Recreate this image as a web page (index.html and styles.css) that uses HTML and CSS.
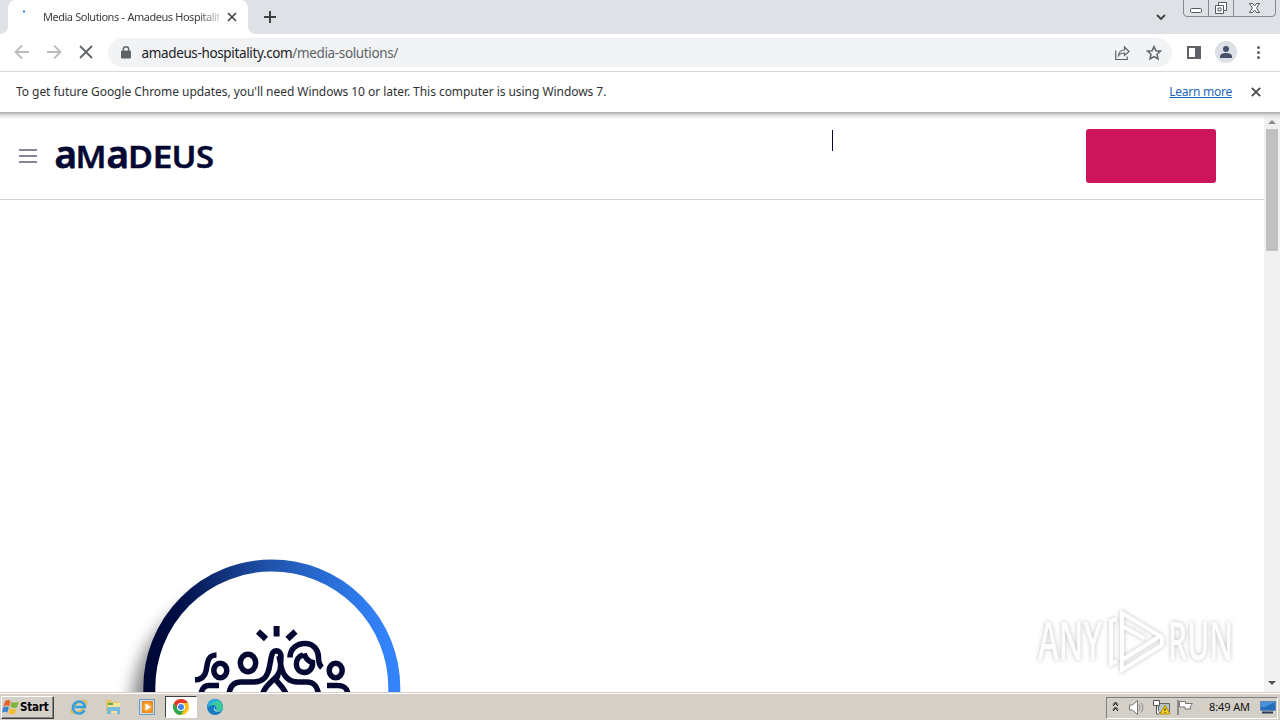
FILE: index.html
```html
<!DOCTYPE html>
<html lang="en">
<head>
<meta charset="utf-8">
<title>Media Solutions - Amadeus Hospitality</title>
<link rel="stylesheet" href="styles.css">
</head>
<body>
<div class="screen">
  <header class="tabstrip">
    <div class="prev-edge"></div>
    <div class="tab">
      <svg class="spinner" width="16" height="16"><path d="M7 3.5a6 6 0 0 1 2 0" fill="none" stroke="#3a78d8" stroke-width="2"/></svg>
      <span class="tab-title">Media Solutions - Amadeus Hospitalit</span>
      <svg class="tab-close" width="10" height="10"><path d="M1 1l8 8M9 1l-8 8" stroke="#3c4043" stroke-width="1.6"/></svg>
    </div>
    <div class="tab-rest">
      <svg width="12" height="12"><path d="M6 0v12M0 6h12" stroke="#3c4043" stroke-width="2"/></svg>
    </div>
    <svg class="chevron" width="10" height="7"><path d="M1 1l4 4 4-4" fill="none" stroke="#3c4043" stroke-width="1.8"/></svg>
    <svg class="wincontrols" width="94" height="17">
      <path d="M.5 0v13q0 3.500 3.500 3.500h85q3.500 0 3.500-3.500V0M25.500 0v16M50.500 0v16" fill="none" stroke="#85888e"/>
      <g fill="#fff" stroke="#54585f">
        <rect x="7.500" y="8.500" width="11" height="4" rx="1"/>
        <path d="M35.500 2.500h8v8h-8z"/><path d="M32.500 5.500h8v8h-8z"/><path d="M35 8h3v3h-3z"/>
        <path d="M66.500 3.500h3l2 2.500 2-2.500h3l-3 4.500 3 4.500h-3l-2-2.500-2 2.500h-3l3-4.500z"/>
      </g>
    </svg>
  </header>

  <nav class="toolbar">
    <svg width="108" height="37" fill="none" stroke="#babcbe" stroke-width="1.800">
      <path d="M29 18H16M22 11.500L15.500 18l6.500 6.500M47 18h13M54 11.500l6.500 6.500-6.500 6.500"/>
      <path d="M80 12l12 12M92 12L80 24" stroke="#5f6368"/>
    </svg>
    <div class="omnibox">
      <svg class="lock" width="10" height="13"><rect y="4.500" width="10" height="8" rx="1" fill="#5f6368"/><path d="M2.300 5V3.500a2.700 2.700 0 0 1 5.400 0V5" fill="none" stroke="#5f6368" stroke-width="1.400"/></svg>
      <span class="url">amadeus-hospitality.com<span class="path">/media-solutions/</span></span>
      <svg class="share" width="50" height="18" fill="none" stroke="#5f6368" stroke-width="1.200">
        <path d="M1.700 6.500v9h11.500v-3M4.500 11.500c.5-4 3-5.500 6-5.500V3l4.500 4.500-4.500 4V9c-3 0-4.500.5-6 2.500z"/>
        <path stroke-width="1.500" d="M40 2.500l1.900 4.300 4.600.4-3.500 3.100 1 4.600-4-2.400-4 2.400 1-4.600-3.500-3.100 4.600-.4z"/>
      </svg>
    </div>
    <svg class="tools" width="108" height="37">
      <rect x="16" y="13" width="12" height="11" fill="none" stroke="#5f6368" stroke-width="2"/><rect x="23" y="12" width="6" height="13" fill="#5f6368"/>
      <circle cx="54" cy="18" r="11" fill="#dcdfe4"/><circle cx="54" cy="15" r="3" fill="#46506b"/><path d="M48 24v-1.500c0-2.500 3-3.500 6-3.500s6 1 6 3.500V24z" fill="#46506b"/>
      <g fill="#5f6368"><circle cx="86.500" cy="13.500" r="1.500"/><circle cx="86.500" cy="18.500" r="1.500"/><circle cx="86.500" cy="23.500" r="1.500"/></g>
    </svg>
  </nav>

  <div class="infobar">
    <span class="info-text">To get future Google Chrome updates, you'll need Windows 10 or later. This computer is using Windows 7.</span>
    <a class="learn">Learn more</a>
    <svg width="10" height="10"><path d="M.8.8l8.400 8.400M9.200.8L.8 9.200" stroke="#4c4f53" stroke-width="1.900"/></svg>
  </div>

  <main class="viewport">
    <section class="page">
      <div class="site-head">
        <svg class="menu" width="18" height="16"><path d="M0 2h18M0 8h18M0 14h18" stroke="#85859a" stroke-width="1.800"/></svg>
        <svg class="logo" width="162" height="44" aria-label="amadeus">
          <g class="logo-text">
            <text class="low" x="0.500" y="33.500" textLength="22.500" lengthAdjust="spacingAndGlyphs">a</text>
            <text x="21.500" y="33.500" textLength="31" lengthAdjust="spacingAndGlyphs">M</text>
            <text class="low" x="52.500" y="33.500" textLength="22.500" lengthAdjust="spacingAndGlyphs">a</text>
            <text x="74" y="33.500" textLength="25" lengthAdjust="spacingAndGlyphs">D</text>
            <text x="98.500" y="33.500" textLength="20" lengthAdjust="spacingAndGlyphs">E</text>
            <text x="117.500" y="33.500" textLength="25" lengthAdjust="spacingAndGlyphs">U</text>
            <text x="142" y="33.500" textLength="18" lengthAdjust="spacingAndGlyphs">S</text>
          </g>
        </svg>
        <div class="caret"></div>
        <div class="cta"></div>
      </div>
      <div class="hero">
        <svg class="badge" width="320" height="150" viewBox="100 542 320 150">
          <defs>
            <linearGradient id="ring" x1="150" y1="670" x2="390" y2="650" gradientUnits="userSpaceOnUse"><stop offset="0" stop-color="#000835"/><stop offset=".13" stop-color="#000d45"/><stop offset=".5" stop-color="#1e4fa6"/><stop offset=".9" stop-color="#2f7bed"/><stop offset="1" stop-color="#3384fc"/></linearGradient>
            <filter id="soft" x="-20%" y="-20%" width="140%" height="140%"><feGaussianBlur stdDeviation="8"/></filter>
          </defs>
          <circle cx="257" cy="709" r="126" fill="#000" opacity=".45" filter="url(#soft)"/>
          <circle cx="271.800" cy="688" r="122.500" fill="#fff" stroke="url(#ring)" stroke-width="12"/>
          <g fill="none" stroke="#050833" stroke-width="5.500">
            <path d="M276.600 626v10.500M258 631.500l8 7.500M295.500 631.500l-8 7.500" stroke-width="6"/>
            <ellipse cx="248" cy="663" rx="7.700" ry="8.700"/>
            <ellipse cx="220.300" cy="670.500" rx="6.500" ry="7.300"/>
            <ellipse cx="335.700" cy="670.500" rx="6.500" ry="7.300"/>
            <path d="M303 655c-9 2-9 17 1 17.500 6 0 9-5 8.500-10-4-1-7-4-8.500-9"/>
            <path d="M290 657.500c0-9 7-14 15-14 9 0 13.500 7 13.500 14 0 5 1 8 3.500 10"/>
            <path d="M216.500 655c-6 0-8 3-9 8l-1.500 8c-1 5-4 8.500-11 9"/>
            <path d="M201 694c1-6 4-8.500 8-8.500h10M327 685.500h10c7 0 10 2 11 8.500"/>
            <path d="M229 694c1-8 5-12 12-12h12c10 0 14-5 16-13l2.500-13c1-7 9-7 9.500 0l-.5 11c-.5 12-14 14-18 27M279 656l2 10c2 9 7 16 17 16h9c7 0 10 4 11.500 12M278 675l-2 5c3 4 8 8 10 14"/>
          </g>
        </svg>
        <svg class="watermark" width="210" height="76" viewBox="1030 604 210 76">
          <g class="mark-text">
            <text x="1038" y="660" textLength="64" lengthAdjust="spacingAndGlyphs">ANY</text>
            <text x="1168" y="660" textLength="65" lengthAdjust="spacingAndGlyphs">RUN</text>
          </g>
          <g class="mark-shape" fill="none" stroke="#fff" stroke-width="4">
            <path d="M1122 648v-35l38 23-38 24zM1117 619l-6 2v43l6-3M1122 660v10l40-25v-8M1122 626l22 12"/>
          </g>
        </svg>
      </div>
    </section>
    <aside class="scrollbar">
      <svg width="16" height="17"><path d="M4 11l4-4 4 4z" fill="#8a8a8a"/></svg>
      <div class="thumb"></div>
      <div class="track"></div>
      <svg width="16" height="17"><path d="M4 6l4 4 4-4z" fill="#505050"/></svg>
    </aside>
  </main>

  <footer class="taskbar">
    <div class="start">
      <svg width="18" height="17" viewBox="0 0 17 16"><path d="M3 2q3-2 5 0L7 7Q4 5 1 7z" fill="#e8622c"/><path d="M9 2.500q3 2 7 0L14 8q-3 1-6-.5z" fill="#7db53c"/><path d="M1 8q3-2 5.500 0L5 13q-2-2-5 0z" fill="#3d82cf"/><path d="M7.500 8.500q3 2 6 .5L12 14q-3 1-6-.5z" fill="#f4bd30"/></svg>
      <span>Start</span>
    </div>
    <div class="apps">
      <svg width="18" height="18"><ellipse cx="9" cy="9" rx="9" ry="4" transform="rotate(-38 9 9)" fill="none" stroke="#e7b735" stroke-width="1.500"/><path d="M14.500 12a6 6 0 1 1 .5-3H5" fill="none" stroke="#35a0df" stroke-width="2.600"/></svg>
      <svg width="18" height="18"><path d="M2 2h5l1 2h7v10H2z" fill="#e8c65b"/><path d="M4 5h12v10H4z" fill="#f7e59b"/><path d="M3 9h13v7h-3v-3H7v3H3z" fill="#75b9dc"/><path d="M4 6h5" stroke="#5ca853" stroke-width="2"/></svg>
      <svg width="18" height="18"><rect x="1.500" y="1.500" width="15" height="15" fill="#c9dcec" stroke="#6c9cc8"/><rect x="4" y="3" width="11" height="12" fill="#f08a1c"/><circle cx="9.500" cy="9" r="4.500" fill="#f7a63c"/><path d="M7.500 5.500v7L13 9z" fill="#fff"/></svg>
      <div class="active-app"><svg width="16" height="16"><circle cx="8" cy="8" r="8" fill="#fbc116"/><path d="M8 8L1.070 4A8 8 0 0 0 8 16l3.500-6z" fill="#2da94f"/><path d="M8 4h6.930A8 8 0 0 0 1.070 4L4.500 10z" fill="#e33b2e"/><circle cx="8" cy="8" r="4" fill="#fff"/><circle cx="8" cy="8" r="3" fill="#4285f4"/></svg></div>
      <svg width="18" height="18"><circle cx="9" cy="9" r="8" fill="#167cc2"/><path d="M2 6a8 8 0 0 1 15 4c0 3-5 4-7 2 2-4-3-7-8-3z" fill="#3ecb9a"/><path d="M1.500 7a8 8 0 0 1 12-4.500C10 3 5 5 2 9z" fill="#27aee0"/><path d="M10 8c-3 2-1 6 5 5-2 1-7 1-7-2q0-2 2-3z" fill="#e9f5f5"/></svg>
    </div>
    <div class="tray">
      <svg width="90" height="20">
        <path d="M6 8l2.500-2.500L11 8M6 13l2.500-2.500L11 13M6 6.500L8.500 4 11 6.500M6 11.500L8.500 9l2.500 2.500" fill="none" stroke="#111"/>
        <path d="M22.500 7h3l5-4.500v14L25.500 12h-3z" fill="#fff" stroke="#777"/><path d="M32 6.500q2 3 0 6M34 4.500q4 5 0 10" fill="none" stroke="#888"/>
        <path d="M51.500 5.500h11v9h-11z" fill="#b7c3cb" stroke="#666"/><path d="M46.500 2.500h6v5h-6zM49.500 8v8h3" fill="#fff" stroke="#555"/><path d="M58 7l5 9H53z" fill="#f7d31d" stroke="#b39210"/><path d="M58 10v3M58 14v1" stroke="#222"/>
        <path d="M71 2v15" stroke="#777" stroke-width="1.500"/><path d="M72.500 3.500h6v2h7l-2.500 3.500 1 2h-6v-2h-5.500z" fill="#fff" stroke="#777"/>
      </svg>
      <span class="clock">8:49 AM</span>
      <svg class="desk" width="16" height="15"><path d="M.5 1.500h15v9H.500z" fill="#246ebd" stroke="#6185ad"/><path d="M1 2h14L5 7H1z" fill="#4693dc"/><path d="M2 12.500h11" stroke="#263c58" stroke-width="2"/></svg>
    </div>
  </footer>
</div>
</body>
</html>
```
FILE: styles.css
```css
body { margin: 0; font-family: "Noto Sans", sans-serif; }
svg { display: block; flex: none; }
.screen { width: 1280px; height: 720px; display: flex; flex-direction: column; overflow: hidden; background: #fff; }
.tabstrip { height: 34px; display: flex; background: #dee1e6; flex: none; }
.prev-edge { width: 8px; background: radial-gradient(circle at 0 0, #dee1e6 7.5px, #fff 8.5px) 0 26px / 8px 8px no-repeat; }
.tab { width: 240px; box-sizing: border-box; height: 34px; background: #fff; border-radius: 8px 8px 0 0; display: flex; align-items: center; padding: 0 11px 0 8px; }
.spinner { align-self: flex-start; margin-top: 8px; }
.tab-title { width: 176px; margin: -1px 8px 0 11px; white-space: nowrap; font-size: 11px; letter-spacing: -.5px; word-spacing: .5px; color: #3c4043; -webkit-mask-image: linear-gradient(90deg, #000 88%, rgba(0,0,0,.25)); mask-image: linear-gradient(90deg, #000 88%, rgba(0,0,0,.25)); }
.tab-rest { flex: 1; padding: 11px 0 0 16px; background: radial-gradient(circle at 8px 0, #dee1e6 7.5px, #fff 8.5px) 0 26px / 8px 8px no-repeat; }
.chevron { margin: 14px 17px 0 0; }
.wincontrols { margin-right: 3px; }
.toolbar { height: 37px; display: flex; flex: none; border-bottom: 1px solid #d6d8db; }
.omnibox { width: 1064px; height: 29px; margin-top: 4px; border-radius: 15px; background: #f1f3f4; display: flex; align-items: center; box-sizing: border-box; padding: 0 8px 0 13px; }
.lock { margin-top: -1px; }
.url { margin-left: 10.5px; flex: 1; font-size: 13.5px; white-space: nowrap; color: #202124; letter-spacing: -.36px; }
.path { color: #5f6368; }
.infobar { height: 40px; flex: none; display: flex; align-items: center; padding: 0 19px 0 16px; border-bottom: 1px solid #b5b5b5; font-size: 12px; color: #303236; white-space: nowrap; }
.info-text { flex: 1; letter-spacing: -.05px; margin-top: -2px; }
.learn { color: #1d67bb; text-decoration: underline; margin: -2px 19px 0 0; letter-spacing: -.25px; }
.viewport { height: 579px; flex: none; display: flex; background: linear-gradient(#b2b2b2 0, #ddd 2px, #fff 6px); }
.page { width: 1264px; display: flex; flex-direction: column; }
.site-head { height: 87px; box-sizing: border-box; border-bottom: 1px solid #d3d3d6; display: flex; align-items: flex-start; padding: 16px 48px 0 19px; }
.menu { margin-top: 19px; }
.logo { margin: 5px 0 0 17px; overflow: visible; }
.logo-text { font-family: "Noto Sans", sans-serif; font-size: 31px; font-weight: 600; fill: #050833; stroke: #050833; stroke-width: .4; }
.logo-text .low { font-size: 37px; stroke-width: .8; }
.caret { width: 1px; height: 21px; background: #050833; margin: 1px 253px 0 616px; }
.cta { width: 130px; height: 54px; background: #cc155b; border-radius: 3px; }
.hero { flex: 1; display: flex; align-items: flex-end; justify-content: space-between; padding: 0 24px 0 100px; }
.watermark { margin-bottom: 12px; overflow: visible; }
.mark-text, .mark-shape { filter: drop-shadow(0 0 2px rgba(0,0,0,.25)); }
.mark-text { font-family: "Open Sans", sans-serif; font-size: 52px; font-weight: 600; fill: #fdfdfd; }
.scrollbar { width: 16px; background: linear-gradient(#b2b2b2 0, #ddd 2px, #f1f1f1 6px); display: flex; flex-direction: column; }
.thumb { height: 122px; margin: -1px 2px 0; background: #c1c1c1; }
.track { flex: 1; }
.taskbar { height: 28px; flex: none; box-sizing: border-box; border-top: 1px solid #d4d0c8; background: #d4d0c8; box-shadow: inset 0 1px #fff; display: flex; align-items: center; }
.start { width: 51px; height: 21px; margin: 1px 0 0 1px; border: 1px solid; border-color: #fff #404040 #404040 #fff; box-shadow: inset -1px -1px #888; display: flex; align-items: center; font: bold 11.5px "DejaVu Sans Condensed", "DejaVu Sans", sans-serif; letter-spacing: -.2px; color: #000; }
.apps { display: flex; align-items: center; margin-left: 16px; gap: 16px; padding-top: 1px; }
.active-app { width: 30px; height: 20px; margin: 0 -7px; background: #fff; border: 1px solid; border-color: #404040 #fff #fff #404040; display: flex; align-items: center; justify-content: center; }
.tray { margin: 2px 2px 0 auto; width: 170px; height: 20px; border: 1px solid; border-color: #808080 #fff #fff #808080; display: flex; align-items: center; }
.clock { font-size: 11px; color: #111; margin: -2px 0 0 12px; white-space: nowrap; letter-spacing: -.1px; }
.desk { margin: 0 1px 0 auto; }
```
